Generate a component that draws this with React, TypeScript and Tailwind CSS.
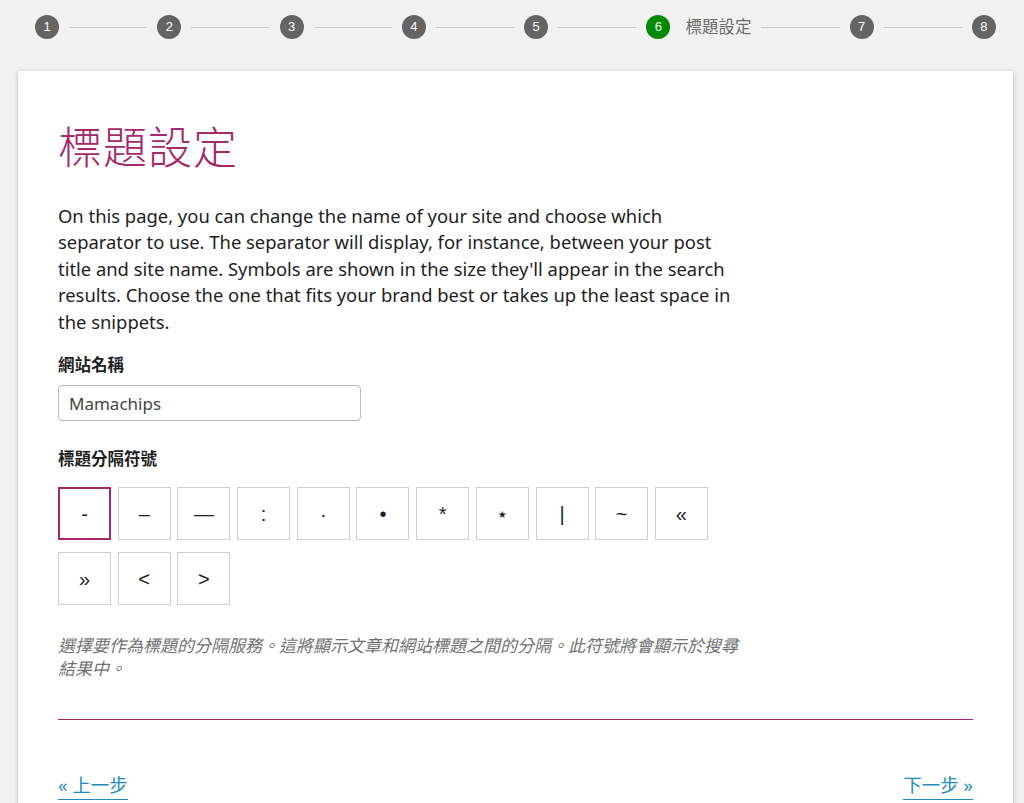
const steps = [1, 2, 3, 4, 5, 6, 7, 8];
const activeStep = 6;
const separators = ["-", "–", "—", ":", "·", "•", "*", "⋆", "|", "~", "«", "»", "<", ">"];

function Stepper() {
  return (
    <div className="flex h-[52px] items-center px-[17px]">
      {steps.map((n, i) => [
        <span
          key={"c" + n}
          className={
            (n === activeStep ? "bg-[#008a00]" : "bg-[#646464]") +
            " flex h-6 w-6 shrink-0 items-center justify-center rounded-full text-[13px] text-white font-['Liberation_Sans',sans-serif]"
          }
        >
          {n}
        </span>,
        n === activeStep && (
          <span key="label" className="ml-[15px] shrink-0 text-[16.5px] text-[#6b6b6b]">
            標題設定
          </span>
        ),
        i < steps.length - 1 && <span key={"l" + n} className="mx-[10px] h-px flex-1 bg-[#c8c8c8]" />,
      ])}
    </div>
  );
}

export default function App() {
  return (
    <div className="min-h-[803px] bg-[#f1f1f1] pt-[1px] font-['Noto_Sans','Noto_Sans_CJK_TC',sans-serif] text-[#1e1e1e]">
      <div className="ml-[18px] w-[995px]">
        <Stepper />
        <div className="mt-[18px] bg-white px-10 pt-[50px] pb-10 shadow-[0_1px_4px_rgba(0,0,0,0.25)]">
          <h1 className="text-[44px] font-light leading-[1.2] tracking-[1px] text-[#a4286a]">標題設定</h1>

          <p className="mt-[29px] w-[680px] text-[18.4px] leading-[26.5px]">
            On this page, you can change the name of your site and choose which separator to use. The
            separator will display, for instance, between your post title and site name. Symbols are
            shown in the size they'll appear in the search results. Choose the one that fits your brand
            best or takes up the least space in the snippets.
          </p>

          <label className="mt-[17px] block text-[16.5px] font-semibold leading-[26px]">網站名稱</label>
          <div className="mt-[7px] flex h-[36px] w-[303px] items-center rounded-[4px] border border-[#b4b9be] px-[10px] text-[17px] text-[#444]">
            Mamachips
          </div>

          <label className="mt-[25px] block text-[16.5px] font-semibold leading-[26px]">標題分隔符號</label>
          <div className="mt-[15px] flex w-[700px] flex-wrap gap-x-[6.7px] gap-y-[12px]">
            {separators.map((s, i) => (
              <button
                key={i}
                className={
                  (i === 0 ? "border-2 border-[#a4286a]" : "border border-[#cfcfcf]") +
                  " flex h-[53px] w-[53px] items-center justify-center bg-white text-[20px] text-[#1e1e1e] font-['Liberation_Sans',sans-serif]"
                }
              >
                {s}
              </button>
            ))}
          </div>

          <p className="mt-[29px] w-[692px] text-[17px] italic leading-[23px] text-[#707070]">
            選擇要作為標題的分隔服務。這將顯示文章和網站標題之間的分隔。此符號將會顯示於搜尋結果中。
          </p>

          <hr className="mt-[39px] border-0 border-t border-[#a4286a]" />

          <div className="mt-[52px] flex justify-between text-[18.5px] leading-[26px] text-[#1e8cbe]">
            <a href="#" className="border-b-[1.5px] border-[#1e8cbe] pb-[1px]">« 上一步</a>
            <a href="#" className="border-b-[1.5px] border-[#1e8cbe] pb-[1px]">下一步 »</a>
          </div>
        </div>
      </div>
    </div>
  );
}
